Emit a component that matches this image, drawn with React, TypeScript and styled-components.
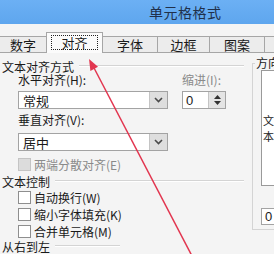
import styled, { createGlobalStyle } from 'styled-components';

const GlobalStyle = createGlobalStyle`
  body {
    margin: 0;
    font-family: "Noto Sans CJK SC", "DejaVu Sans", sans-serif;
    font-size: 12px;
    color: #1a1a1a;
  }
`;

const Window = styled.div`
  position: relative;
  width: 274px;
  height: 254px;
  overflow: hidden;
  background: #f4f4f4;
  display: flex;
  flex-direction: column;
`;

const TitleBar = styled.div`
  height: 24px;
  flex-shrink: 0;
  background: linear-gradient(#6cb0f4, #5ea6ee);
  display: flex;
  align-items: center;
  padding-left: 149px;
  font-size: 14px;
  color: #20304a;
  letter-spacing: 0.5px;
`;

const TabStrip = styled.div`
  height: 29px;
  flex-shrink: 0;
  display: flex;
  align-items: flex-end;
  border-bottom: 1px solid #a6a6a6;
  box-sizing: border-box;
`;

const Tab = styled.div<{ $w: number; $active?: boolean }>`
  width: ${({ $w }) => $w}px;
  flex-shrink: 0;
  height: ${({ $active }) => ($active ? 21 : 16)}px;
  box-sizing: border-box;
  border: 1px solid #a6a6a6;
  border-bottom: none;
  margin-left: -1px;
  background: ${({ $active }) => ($active ? '#fbfbfb' : '#ececec')};
  display: flex;
  align-items: center;
  justify-content: center;
  font-size: 13px;
  margin-bottom: ${({ $active }) => ($active ? -1 : 0)}px;
  padding-bottom: ${({ $active }) => ($active ? 1 : 0)}px;
`;

const FocusRing = styled.span`
  border: 1px dotted #222;
  padding: 0 9px;
  line-height: 13px;
`;

const Body = styled.div`
  flex: 1;
  display: flex;
  gap: 8px;
  align-items: flex-start;
`;

const LeftCol = styled.div`
  width: 244px;
  flex-shrink: 0;
  padding: 6px 0 0 2px;
  box-sizing: border-box;
  display: flex;
  flex-direction: column;
`;

const GroupHeader = styled.div<{ $w?: number; $mt?: number }>`
  display: flex;
  align-items: center;
  height: 14px;
  flex-shrink: 0;
  width: ${({ $w }) => ($w ? `${$w}px` : 'auto')};
  margin-top: ${({ $mt }) => $mt ?? 0}px;
  white-space: nowrap;
  &::after {
    content: '';
    flex: 1;
    margin-left: 5px;
    border-top: 1px solid #d4d4d4;
    border-bottom: 1px solid #ffffff;
  }
`;

const Indent = styled.div`
  padding-left: 16px;
  display: flex;
  flex-direction: column;
`;

const AlignRow = styled.div`
  display: flex;
  gap: 14px;
`;

const Field = styled.div`
  display: flex;
  flex-direction: column;
`;

const Label = styled.div<{ $mt?: number; $muted?: boolean }>`
  height: 14px;
  line-height: 14px;
  margin-top: ${({ $mt }) => $mt ?? 0}px;
  color: ${({ $muted }) => ($muted ? '#8a8a8a' : '#1a1a1a')};
  white-space: nowrap;
`;

const Combo = styled.div<{ $mt?: number }>`
  width: 150px;
  height: 18px;
  margin-top: ${({ $mt }) => $mt ?? 0}px;
  box-sizing: border-box;
  border: 1px solid #a3a3a3;
  background: #fff;
  display: flex;
  align-items: stretch;
  font-size: 13px;
`;

const ComboText = styled.div`
  flex: 1;
  padding-left: 4px;
  display: flex;
  align-items: center;
`;

const DropButton = styled.div`
  width: 17px;
  background: #dedede;
  border-left: 1px solid #c4c4c4;
  display: flex;
  align-items: center;
  justify-content: center;
`;

const Spin = styled.div<{ $w: number; $h?: number; $mt?: number }>`
  width: ${({ $w }) => $w}px;
  height: ${({ $h }) => $h ?? 18}px;
  flex-shrink: 0;
  margin-top: ${({ $mt }) => $mt ?? 0}px;
  box-sizing: border-box;
  border: 1px solid #a3a3a3;
  background: #fff;
  display: flex;
  font-family: "Liberation Sans", sans-serif;
  font-size: 13px;
`;

const SpinText = styled.div`
  flex: 1;
  padding-left: 3px;
  display: flex;
  align-items: center;
`;

const SpinButtons = styled.div`
  width: 16px;
  background: #e4e4e4;
  border-left: 1px solid #c4c4c4;
  display: flex;
  flex-direction: column;
  align-items: center;
  justify-content: center;
  gap: 2px;
`;

const Check = styled.div<{ $mt?: number; $disabled?: boolean }>`
  display: flex;
  align-items: center;
  height: 14px;
  flex-shrink: 0;
  margin-top: ${({ $mt }) => $mt ?? 0}px;
  gap: 3px;
  color: ${({ $disabled }) => ($disabled ? '#8a8a8a' : '#1a1a1a')};
  white-space: nowrap;
`;

const Box = styled.span<{ $disabled?: boolean }>`
  width: 13px;
  height: 13px;
  box-sizing: border-box;
  border: 1px solid ${({ $disabled }) => ($disabled ? '#c4c4c4' : '#8e8e8e')};
  background: ${({ $disabled }) => ($disabled ? '#dcdcdc' : '#fff')};
  flex-shrink: 0;
`;

const OrientGroup = styled.fieldset`
  margin: 4px 0 0 0;
  padding: 0 0 4px 8px;
  border: 1px solid #d4d4d4;
  border-right: none;
  flex: 1;
  display: flex;
  flex-direction: column;
  min-width: 0;
`;

const Legend = styled.legend`
  padding: 0 1px;
  margin-left: -6px;
  line-height: 12px;
  white-space: nowrap;
`;

const OrientBox = styled.div`
  height: 116px;
  flex-shrink: 0;
  margin-top: 1px;
  box-sizing: border-box;
  border: 1px solid #9a9a9a;
  border-right: none;
  background: #fff;
  display: flex;
  align-items: center;
  padding-left: 1px;
`;

const VerticalText = styled.div`
  width: 12px;
  font-size: 11px;
  line-height: 16px;
  text-align: center;
`;

const Arrow = styled.svg`
  position: absolute;
  left: 0;
  top: 0;
  pointer-events: none;
`;

const Chevron = () => (
  <svg width="9" height="6" viewBox="0 0 9 6">
    <path d="M1 1 L4.5 4.5 L8 1" fill="none" stroke="#4a4a4a" strokeWidth="1.6" />
  </svg>
);

const Tri = ({ up }: { up?: boolean }) => (
  <svg width="7" height="4" viewBox="0 0 7 4">
    <path d={up ? 'M0 4 L3.5 0 L7 4 Z' : 'M0 0 L3.5 4 L7 0 Z'} fill="#333" />
  </svg>
);

export default function App() {
  return (
    <Window>
      <GlobalStyle />
      <TitleBar>单元格格式</TitleBar>
      <TabStrip>
        <Tab $w={48} style={{ marginLeft: -1 }}>数字</Tab>
        <Tab $w={57} $active>
          <FocusRing>对齐</FocusRing>
        </Tab>
        <Tab $w={56}>字体</Tab>
        <Tab $w={53}>边框</Tab>
        <Tab $w={56}>图案</Tab>
        <Tab $w={40} />
      </TabStrip>
      <Body>
        <LeftCol>
          <GroupHeader>文本对齐方式</GroupHeader>
          <Indent>
            <AlignRow>
              <Field>
                <Label>水平对齐(H):</Label>
                <Combo $mt={4}>
                  <ComboText>常规</ComboText>
                  <DropButton>
                    <Chevron />
                  </DropButton>
                </Combo>
              </Field>
              <Field>
                <Label $muted>缩进(I):</Label>
                <Spin $w={44} $mt={4}>
                  <SpinText>0</SpinText>
                  <SpinButtons>
                    <Tri up />
                    <Tri />
                  </SpinButtons>
                </Spin>
              </Field>
            </AlignRow>
            <Label $mt={4}>垂直对齐(V):</Label>
            <Combo $mt={6}>
              <ComboText>居中</ComboText>
              <DropButton>
                <Chevron />
              </DropButton>
            </Combo>
            <Check $mt={6} $disabled>
              <Box $disabled />
              两端分散对齐(E)
            </Check>
          </Indent>
          <GroupHeader $mt={3}>文本控制</GroupHeader>
          <Indent>
            <Check $mt={2}>
              <Box />
              自动换行(W)
            </Check>
            <Check $mt={3}>
              <Box />
              缩小字体填充(K)
            </Check>
            <Check $mt={3}>
              <Box />
              合并单元格(M)
            </Check>
          </Indent>
          <GroupHeader $mt={1} $w={118}>从右到左</GroupHeader>
        </LeftCol>
        <OrientGroup>
          <Legend>方向</Legend>
          <OrientBox>
            <VerticalText>文本</VerticalText>
          </OrientBox>
          <Spin $w={40} $h={17} $mt={22}>
            <SpinText>0</SpinText>
          </Spin>
        </OrientGroup>
      </Body>
      <Arrow width="274" height="254" viewBox="0 0 274 254">
        <line x1="192" y1="256" x2="93" y2="66" stroke="#e2354f" strokeWidth="1.5" />
        <path d="M89 59 L90.4 71 L98 66.8 Z" fill="#e2354f" />
      </Arrow>
    </Window>
  );
}
